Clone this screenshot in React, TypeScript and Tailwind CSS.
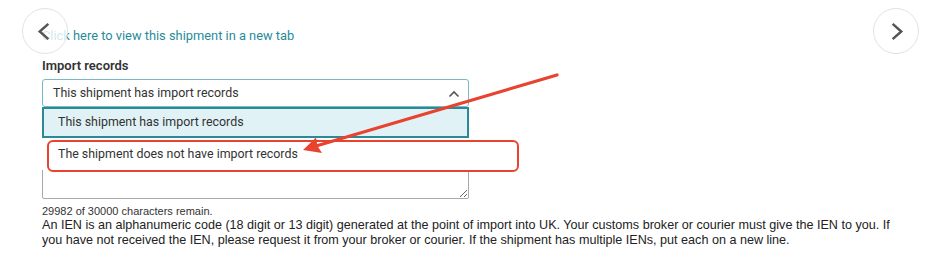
import React from 'react';

const roboto = { fontFamily: 'Roboto, sans-serif' };
const arial = { fontFamily: '"Liberation Sans", Arial, sans-serif' };

export default function App() {
  return (
    <div className="relative h-[268px] w-[928px] overflow-hidden bg-white">
      <div className="flex flex-col pl-[42px] pt-[27px]">
        <a href="#" className="text-[12.85px] leading-[18px] text-[#1f8b99]" style={roboto}>
          Click here to view this shipment in a new tab
        </a>
        <div className="mt-[12px] text-[13px] font-semibold leading-[18px] text-[#333]" style={roboto}>
          Import records
        </div>

        {/* Select + textarea */}
        <div className="relative mt-[4px] flex w-[427px] flex-col gap-[6px]" style={roboto}>
          <div className="flex h-[28px] items-center justify-between rounded-[3px] border border-[#78b9c3] pl-[10px] pr-[8px] text-[12.4px] text-[#333]">
            <span>This shipment has import records</span>
            <svg width="12" height="8" viewBox="0 0 12 8" className="mt-[1px]">
              <polyline points="1.5,6.5 6,2 10.5,6.5" fill="none" stroke="#555" strokeWidth="1.6" />
            </svg>
          </div>
          <textarea className="block h-[86px] w-full rounded-[2px] border border-[#a9a9a9] bg-white" />

          {/* Open dropdown */}
          <div className="absolute left-0 right-0 top-[28px] flex flex-col bg-white text-[12.4px] text-[#333]">
            <div className="flex h-[31px] items-center border-2 border-[#2b8a96] bg-[#e1f2f7] pl-[14px]">
              This shipment has import records
            </div>
            <div className="flex h-[32px] items-center pl-[16px]">
              The shipment does not have import records
            </div>
          </div>
        </div>

        <div className="mt-[5px] text-[11px] leading-[14px] text-[#333]" style={arial}>
          29982 of 30000 characters remain.
        </div>
        <p className="w-[858px] text-[12.6px] leading-[15px] text-[#222]" style={arial}>
          An IEN is an alphanumeric code (18 digit or 13 digit) generated at the point of import into UK. Your customs broker or courier must give the IEN to you. If you have not received the IEN, please request it from your broker or courier. If the shipment has multiple IENs, put each on a new line.
        </p>
      </div>

      {/* Carousel arrows */}
      <div className="absolute left-[22px] top-[8px] flex h-[46px] w-[46px] items-center justify-center rounded-full border border-[#e2e2e2] bg-white/80">
        <svg width="46" height="46" viewBox="0 0 46 46">
          <polyline points="26.5,15.5 17.5,23.5 26.5,31.5" fill="none" stroke="#555" strokeWidth="2.6" />
        </svg>
      </div>
      <div className="absolute left-[873px] top-[8px] flex h-[46px] w-[46px] items-center justify-center rounded-full border border-[#e2e2e2] bg-white/80">
        <svg width="46" height="46" viewBox="0 0 46 46">
          <polyline points="19.5,15.5 28.5,23.5 19.5,31.5" fill="none" stroke="#555" strokeWidth="2.6" />
        </svg>
      </div>

      {/* Annotation */}
      <div className="pointer-events-none absolute left-[47px] top-[140px] h-[32px] w-[472px] rounded-[6px] border-[2.5px] border-[#e8432f]" />
      <svg className="pointer-events-none absolute left-0 top-0" width="928" height="268" viewBox="0 0 928 268">
        <line x1="557" y1="75" x2="316" y2="146" stroke="#e8432f" strokeWidth="3.2" strokeLinecap="round" />
        <polygon points="303,150 322,153 317.5,146 316,137.5" fill="#e8432f" />
      </svg>
    </div>
  );
}
